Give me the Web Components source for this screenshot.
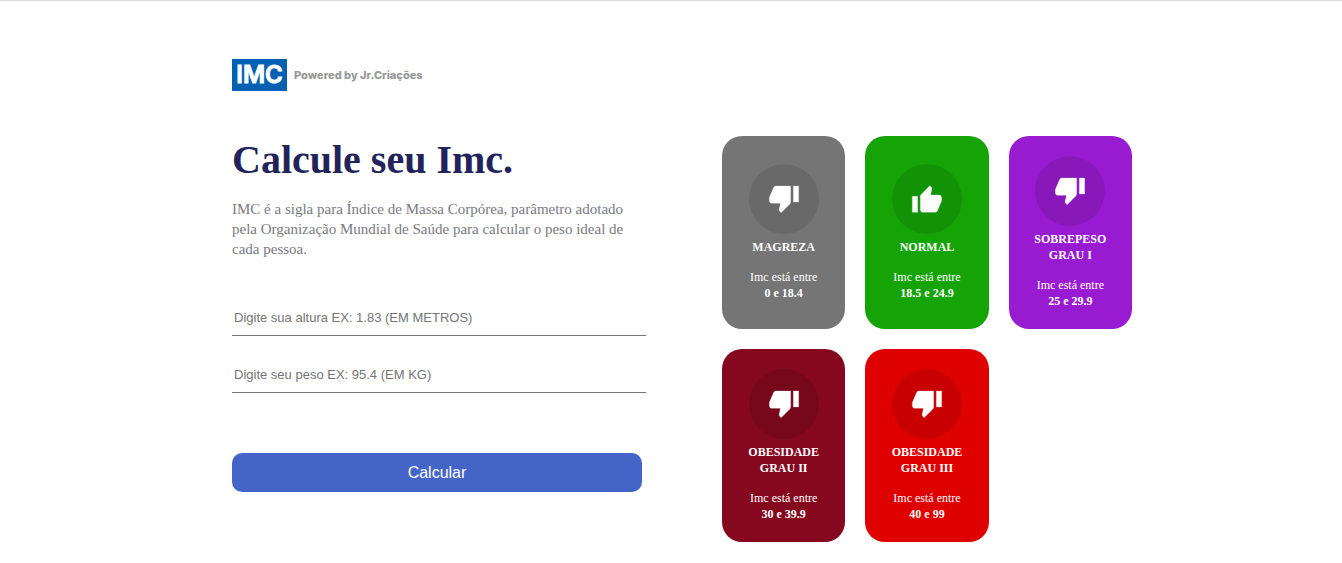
<!DOCTYPE html>
<html lang="pt-BR">
<head>
<meta charset="utf-8">
<meta name="viewport" content="width=device-width, initial-scale=1">
<title>Calculadora de IMC</title>
<style>
  body { margin: 0; background: #fff; font-family: "Liberation Serif", "Times New Roman", serif; }
</style>
</head>
<body>
<imc-app></imc-app>

<template id="imc-app">
  <style>
    :host { display: block; border-top: 1px solid #dadada; padding: 58px 20px 20px 42px; }
    .container { max-width: 900px; margin: 0 auto; }
    main { display: grid; grid-template-columns: repeat(2, minmax(0, 1fr)); column-gap: 80px; margin-top: 45px; }
    .cards { display: grid; grid-template-columns: repeat(3, minmax(0, 1fr)); gap: 20px; align-content: start; }
    @media (max-width: 760px) { main { grid-template-columns: minmax(0, 1fr); row-gap: 40px; } }
  </style>
  <div class="container">
    <header><imc-logo></imc-logo></header>
    <main>
      <imc-form></imc-form>
      <section class="cards" aria-label="Classificações">
        <imc-card color="#757575" range="0 e 18.4">MAGREZA</imc-card>
        <imc-card color="#15a306" range="18.5 e 24.9" icon="up">NORMAL</imc-card>
        <imc-card color="#991bd1" range="25 e 29.9">SOBREPESO GRAU I</imc-card>
        <imc-card color="#85081f" range="30 e 39.9">OBESIDADE GRAU II</imc-card>
        <imc-card color="#df0000" range="40 e 99">OBESIDADE GRAU III</imc-card>
      </section>
    </main>
  </div>
</template>

<template id="imc-logo">
  <style>
    :host { display: flex; align-items: center; gap: 7px; height: 32px; font-family: Inter, "Liberation Sans", sans-serif; }
    .mark { display: grid; place-items: center; width: 55px; height: 32px; background: #0060b2; color: #fff; font-size: 24px; line-height: 32px; font-weight: 600; -webkit-text-stroke: 1px #fff; }
    .by { color: #979797; font-size: 11px; line-height: 16px; font-weight: 800; white-space: nowrap; }
  </style>
  <span class="mark">IMC</span>
  <span class="by">Powered by Jr.Criações</span>
</template>

<template id="imc-form">
  <style>
    :host { display: block; }
    h1 { margin: 0; color: #23235b; font-size: 40px; line-height: 48px; font-weight: 700; }
    p { margin: 15px 0 40px; color: #7a7a80; font-size: 15px; line-height: 20px; }
    imc-field { margin-bottom: 20px; }
    button { display: block; width: 100%; height: 39px; margin-top: 60px; padding: 0; border: 0; border-radius: 10px; background: #4464c8; color: #fff; font: 16px "Liberation Sans", Arial, sans-serif; cursor: pointer; }
  </style>
  <h1>Calcule seu Imc.</h1>
  <p>IMC é a sigla para Índice de Massa Corpórea, parâmetro adotado pela Organização Mundial de Saúde para calcular o peso ideal de cada pessoa.</p>
  <form>
    <imc-field hint="Digite sua altura EX: 1.83 (EM METROS)"></imc-field>
    <imc-field hint="Digite seu peso EX: 95.4 (EM KG)"></imc-field>
    <button type="button">Calcular</button>
  </form>
</template>

<template id="imc-field">
  <style>
    :host { display: block; }
    input { display: block; box-sizing: content-box; width: 100%; height: 36px; padding: 0 2px; border: 0; border-bottom: 1px solid #757575; border-radius: 0; outline: 0; background: none; color: #333; font: 13px "Liberation Sans", Arial, sans-serif; }
    input::placeholder { color: #757575; opacity: 1; }
  </style>
  <input type="text" inputmode="decimal">
</template>

<template id="imc-card">
  <style>
    :host { display: flex; flex-direction: column; align-items: center; justify-content: center; box-sizing: border-box; min-height: 193px; padding: 20px; border-radius: 20px; color: #fff; text-align: center; font-size: 12px; line-height: 16px; }
    .disc { display: grid; place-items: center; width: 70px; height: 70px; border-radius: 50%; background: rgba(0, 0, 0, .1); }
    svg { display: block; width: 32px; height: 32px; fill: #fff; }
    h2 { margin: 5px 0 14px; font-size: 12px; line-height: 16px; font-weight: 700; }
    p { margin: 0; }
    strong { display: block; }
  </style>
  <div class="disc"><svg aria-hidden="true"><path stroke="#fff" stroke-opacity=".35" stroke-width=".5" stroke-linejoin="round"></path></svg></div>
  <h2><slot></slot></h2>
  <p>Imc está entre <strong></strong></p>
</template>

<script>
  class TemplateElement extends HTMLElement {
    constructor() {
      super();
      this.attachShadow({ mode: "open" }).append(
        document.getElementById(this.localName).content.cloneNode(true)
      );
    }
  }

  // Each thumb's viewBox centres its outline vertically in the disc.
  const THUMBS = {
    up: {
      box: "0 -1 24 24",
      path: "M1 21h4V9H1v12zm22-11c0-1.100-.9-2-2-2h-6.310l.95-4.570.03-.32c0-.41-.17-.79-.44-1.060L14.170 1 7.590 7.590C7.220 7.950 7 8.450 7 9v10c0 1.100.9 2 2 2h9c.83 0 1.540-.5 1.840-1.220l3.020-7.050c.09-.23.14-.47.14-.73v-2z"
    },
    down: {
      box: "0 .75 24 24",
      path: "M15 3H6c-.83 0-1.540.5-1.840 1.220l-3.020 7.050c-.09.23-.14.47-.14.73v2c0 1.100.9 2 2 2h6.310l-.95 4.570-.03.32c0 .41.17.79.44 1.060L9.830 23l6.590-6.590c.36-.36.58-.86.58-1.410V3h-2zm4 0v12h4V3h-4z"
    }
  };

  customElements.define("imc-logo", class extends TemplateElement {});

  customElements.define("imc-field", class extends TemplateElement {
    connectedCallback() {
      const input = this.shadowRoot.querySelector("input");
      input.placeholder = this.getAttribute("hint");
      input.setAttribute("aria-label", this.getAttribute("hint"));
    }
  });

  customElements.define("imc-card", class extends TemplateElement {
    connectedCallback() {
      const thumb = THUMBS[this.getAttribute("icon") || "down"];
      this.style.backgroundColor = this.getAttribute("color");
      this.shadowRoot.querySelector("svg").setAttribute("viewBox", thumb.box);
      this.shadowRoot.querySelector("path").setAttribute("d", thumb.path);
      this.shadowRoot.querySelector("strong").textContent = this.getAttribute("range");
    }
  });

  customElements.define("imc-form", class extends TemplateElement {});
  customElements.define("imc-app", class extends TemplateElement {});
</script>
</body>
</html>
